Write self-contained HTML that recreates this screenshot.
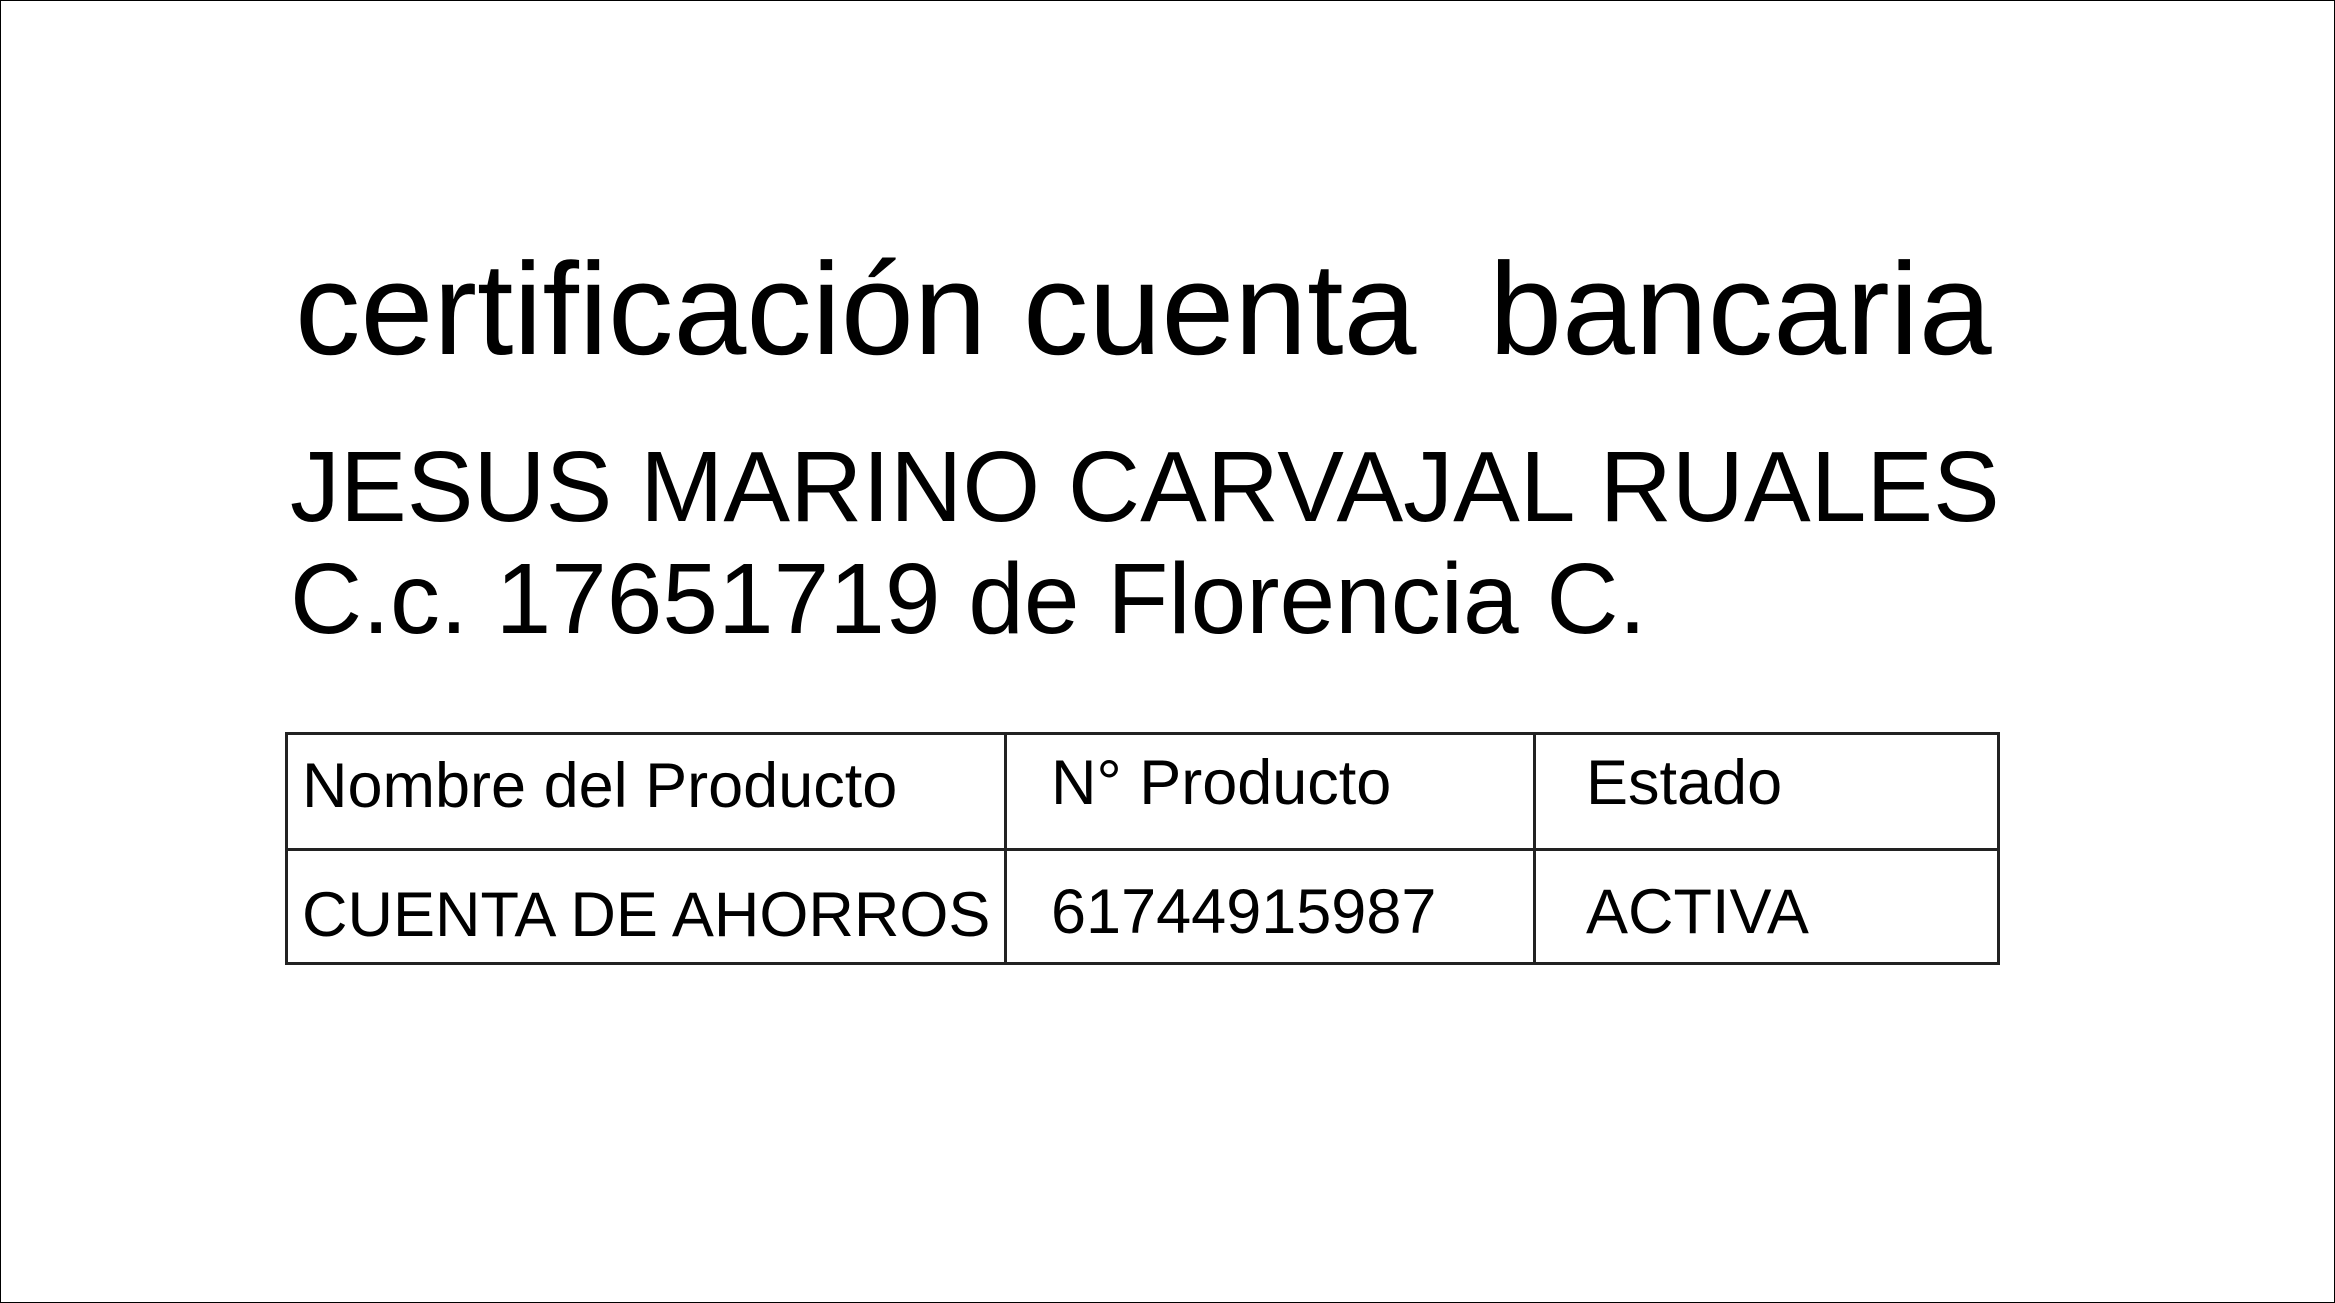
<!DOCTYPE html>
<html><head><meta charset="utf-8"><style>
html,body{margin:0;padding:0;background:#fff}
body{width:2335px;height:1303px;position:relative;overflow:hidden;font-family:"Liberation Sans",Arial,sans-serif;color:#000}
.frame{position:absolute;left:0;top:0;width:2333px;height:1301px;border:1px solid #000}
.t{position:absolute;white-space:pre;line-height:1}
.l{position:absolute;background:#222}
</style></head><body>
<div class="frame"></div>
<div class="t" style="left:295px;top:243px;font-size:131px">certificación cuenta  bancaria</div>
<div class="t" style="left:290px;top:437px;font-size:100px">JESUS MARINO CARVAJAL RUALES</div>
<div class="t" style="left:290px;top:549px;font-size:100px">C.c. 17651719 de Florencia C.</div>
<div class="l" style="left:285px;top:732px;width:1714px;height:3px"></div>
<div class="l" style="left:285px;top:848px;width:1714px;height:3px"></div>
<div class="l" style="left:285px;top:962px;width:1714px;height:3px"></div>
<div class="l" style="left:285px;top:732px;width:3px;height:233px"></div>
<div class="l" style="left:1004px;top:732px;width:3px;height:233px"></div>
<div class="l" style="left:1533px;top:732px;width:3px;height:233px"></div>
<div class="l" style="left:1997px;top:732px;width:3px;height:233px"></div>
<div class="t" style="left:302px;top:755px;font-size:63px">Nombre del Producto</div>
<div class="t" style="left:1051px;top:752px;font-size:63px">N° Producto</div>
<div class="t" style="left:1586px;top:752px;font-size:63px">Estado</div>
<div class="t" style="left:302px;top:884px;font-size:63px">CUENTA DE AHORROS</div>
<div class="t" style="left:1051px;top:881px;font-size:63px">61744915987</div>
<div class="t" style="left:1586px;top:881px;font-size:63px">ACTIVA</div>
</body></html>
